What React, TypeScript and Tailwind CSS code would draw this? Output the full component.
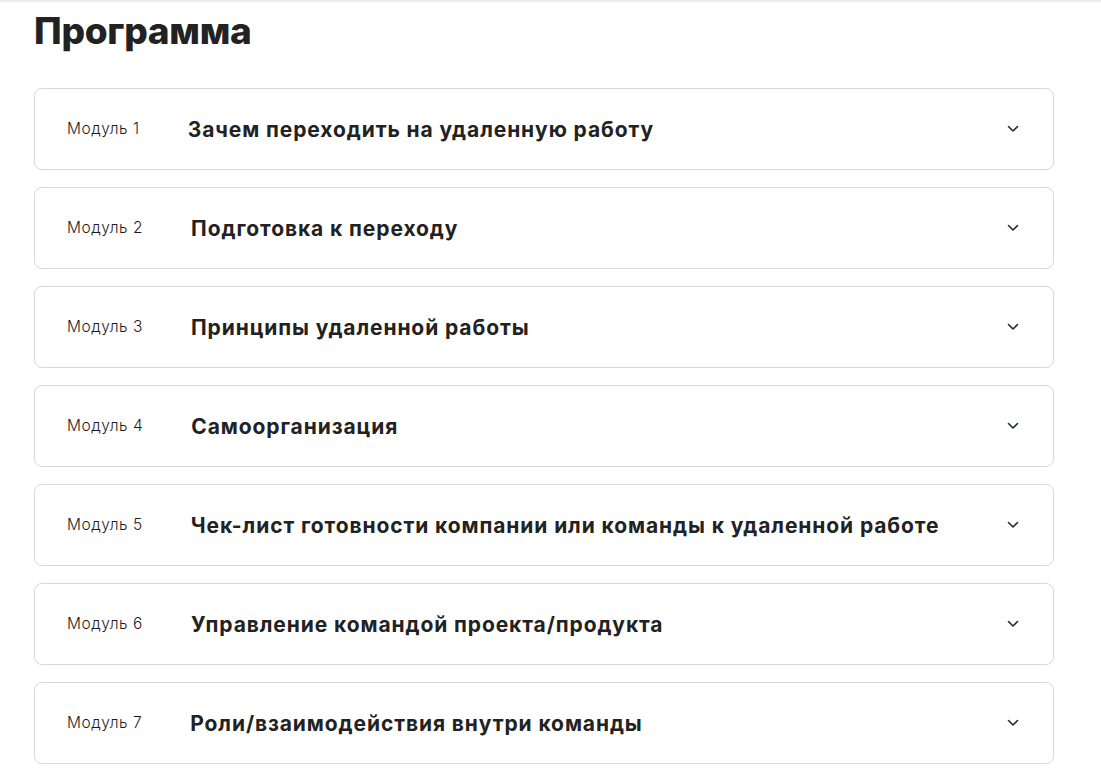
import React from "react";

const modules = [
  "Зачем переходить на удаленную работу",
  "Подготовка к переходу",
  "Принципы удаленной работы",
  "Самоорганизация",
  "Чек-лист готовности компании или команды к удаленной работе",
  "Управление командой проекта/продукта",
  "Роли/взаимодействия внутри команды",
];

function Chevron() {
  return (
    <svg width="12" height="8" viewBox="0 0 12 8" fill="none" className="shrink-0">
      <path d="M1.5 1.5L6 6L10.5 1.5" stroke="#1f2a3a" strokeWidth="1.6" strokeLinecap="round" strokeLinejoin="round" />
    </svg>
  );
}

export default function App() {
  return (
    <div className="min-h-screen bg-white border-t-2 border-[#ececec]" style={{ fontFamily: "Inter, 'Noto Sans', sans-serif" }}>
      <div className="pl-[34px] w-[1054px]">
        <h1 className="text-[37px] leading-[44px] font-extrabold text-[#222222] pt-[7px] tracking-[-0.3px]">Программа</h1>
        <div className="mt-[35px] flex flex-col gap-[17px]">
          {modules.map((m, i) => (
            <div key={i} className="h-[82px] rounded-[8px] border border-[#d8d8dc] flex items-center pl-[32px] pr-[34px]">
              <span className="text-[15.5px] font-light text-[#1f1b24] tracking-[0.55px] mr-[48px] shrink-0">Модуль {i + 1}</span>
              <span className="text-[21px] font-bold text-[#222222] tracking-[0.9px] flex-1 pt-[1px]">{m}</span>
              <Chevron />
            </div>
          ))}
        </div>
      </div>
    </div>
  );
}
